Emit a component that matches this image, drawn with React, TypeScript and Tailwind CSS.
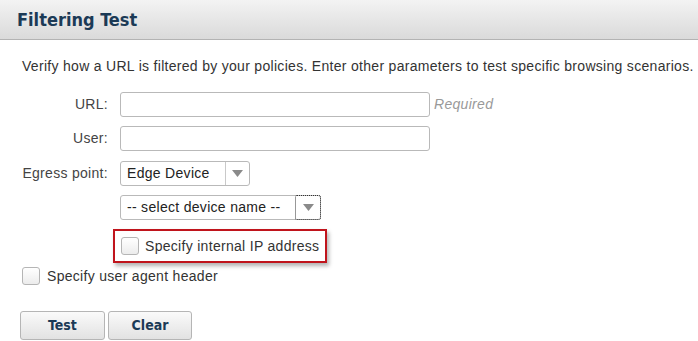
import React from 'react';

const sans = "font-['Liberation_Sans',Arial,sans-serif]";
const heading = "font-['DejaVu_Sans_Condensed','DejaVu_Sans',sans-serif] font-stretch-condensed font-bold text-[#1b3a56]";

function Arrow() {
  return (
    <svg width="11" height="7" viewBox="0 0 11 7">
      <path d="M0 0 H11 L5.5 7 Z" fill="#8a8a8a" />
    </svg>
  );
}

function Checkbox() {
  return <span className="inline-block shrink-0 w-[18px] h-[18px] rounded-[3px] border border-[#b5b5b5] bg-gradient-to-b from-white to-[#ececec]" />;
}

function Label({ children }: { children: React.ReactNode }) {
  return <div className="w-[88px] text-right text-[14px] tracking-[0.3px] text-[#444] mr-[12px] whitespace-nowrap">{children}</div>;
}

export default function App() {
  return (
    <div className={`w-[698px] h-[341px] bg-white overflow-hidden ${sans}`}>
      <div className="h-[40px] bg-gradient-to-b from-[#f3f3f3] to-[#dadada] border-b border-[#b3b3b3] flex items-center pl-[17px]">
        <h1 className={`${heading} text-[18px]`}>Filtering Test</h1>
      </div>

      <p className="mt-[16px] ml-[22px] h-[20px] leading-[20px] text-[14px] tracking-[0.3px] text-[#333] whitespace-nowrap">
        Verify how a URL is filtered by your policies. Enter other parameters to test specific browsing scenarios.
      </p>

      <div className="ml-[20px] mt-[16px] flex flex-col text-[14px] tracking-[0.3px]">
        <div className="flex items-center h-[25px]">
          <Label>URL:</Label>
          <div className="w-[310px] h-[25px] rounded-[3px] border border-[#b9b9b9] bg-white" />
          <span className="ml-[4px] italic text-[#999]">Required</span>
        </div>
        <div className="flex items-center h-[25px] mt-[9px]">
          <Label>User:</Label>
          <div className="w-[310px] h-[25px] rounded-[3px] border border-[#b9b9b9] bg-white" />
        </div>
        <div className="flex items-center h-[25px] mt-[10px]">
          <Label>Egress point:</Label>
          <div className="w-[130px] h-[25px] rounded-[3px] border border-[#b9b9b9] bg-white flex items-center">
            <span className="flex-1 pl-[6px] text-[#222] whitespace-nowrap">Edge Device</span>
            <span className="w-[24px] h-full border-l border-[#c9c9c9] flex items-center justify-center"><Arrow /></span>
          </div>
        </div>
        <div className="flex items-center h-[25px] mt-[9px] ml-[100px]">
          <div className="w-[201px] h-[25px] rounded-[3px] border border-[#b9b9b9] bg-white flex items-center">
            <span className="flex-1 pl-[6px] text-[#222] whitespace-nowrap">-- select device name --</span>
            <span className="w-[26px] h-[25px] -mr-px border border-dotted border-[#333] rounded-[2px] flex items-center justify-center"><Arrow /></span>
          </div>
        </div>
        <div className="ml-[93px] mt-[9px] w-[214px] h-[34px] border-2 border-[#c0141c] shadow-[2px_3px_4px_rgba(0,0,0,0.3)] flex items-center pl-[6px]">
          <Checkbox />
          <span className="ml-[6px] text-[#333] whitespace-nowrap">Specify internal IP address</span>
        </div>
        <div className="flex items-center h-[20px] mt-[3px] ml-[2px]">
          <Checkbox />
          <span className="ml-[7px] text-[#333] whitespace-nowrap">Specify user agent header</span>
        </div>
        <div className="flex mt-[25px] gap-[3px]">
          <button className={`w-[85px] h-[29px] rounded-[3px] border border-[#b5b5b5] bg-gradient-to-b from-[#fafafa] to-[#e2e2e2] text-[14px] tracking-normal ${heading}`}>Test</button>
          <button className={`w-[84px] h-[29px] rounded-[3px] border border-[#b5b5b5] bg-gradient-to-b from-[#fafafa] to-[#e2e2e2] text-[14px] tracking-normal ${heading}`}>Clear</button>
        </div>
      </div>
    </div>
  );
}
